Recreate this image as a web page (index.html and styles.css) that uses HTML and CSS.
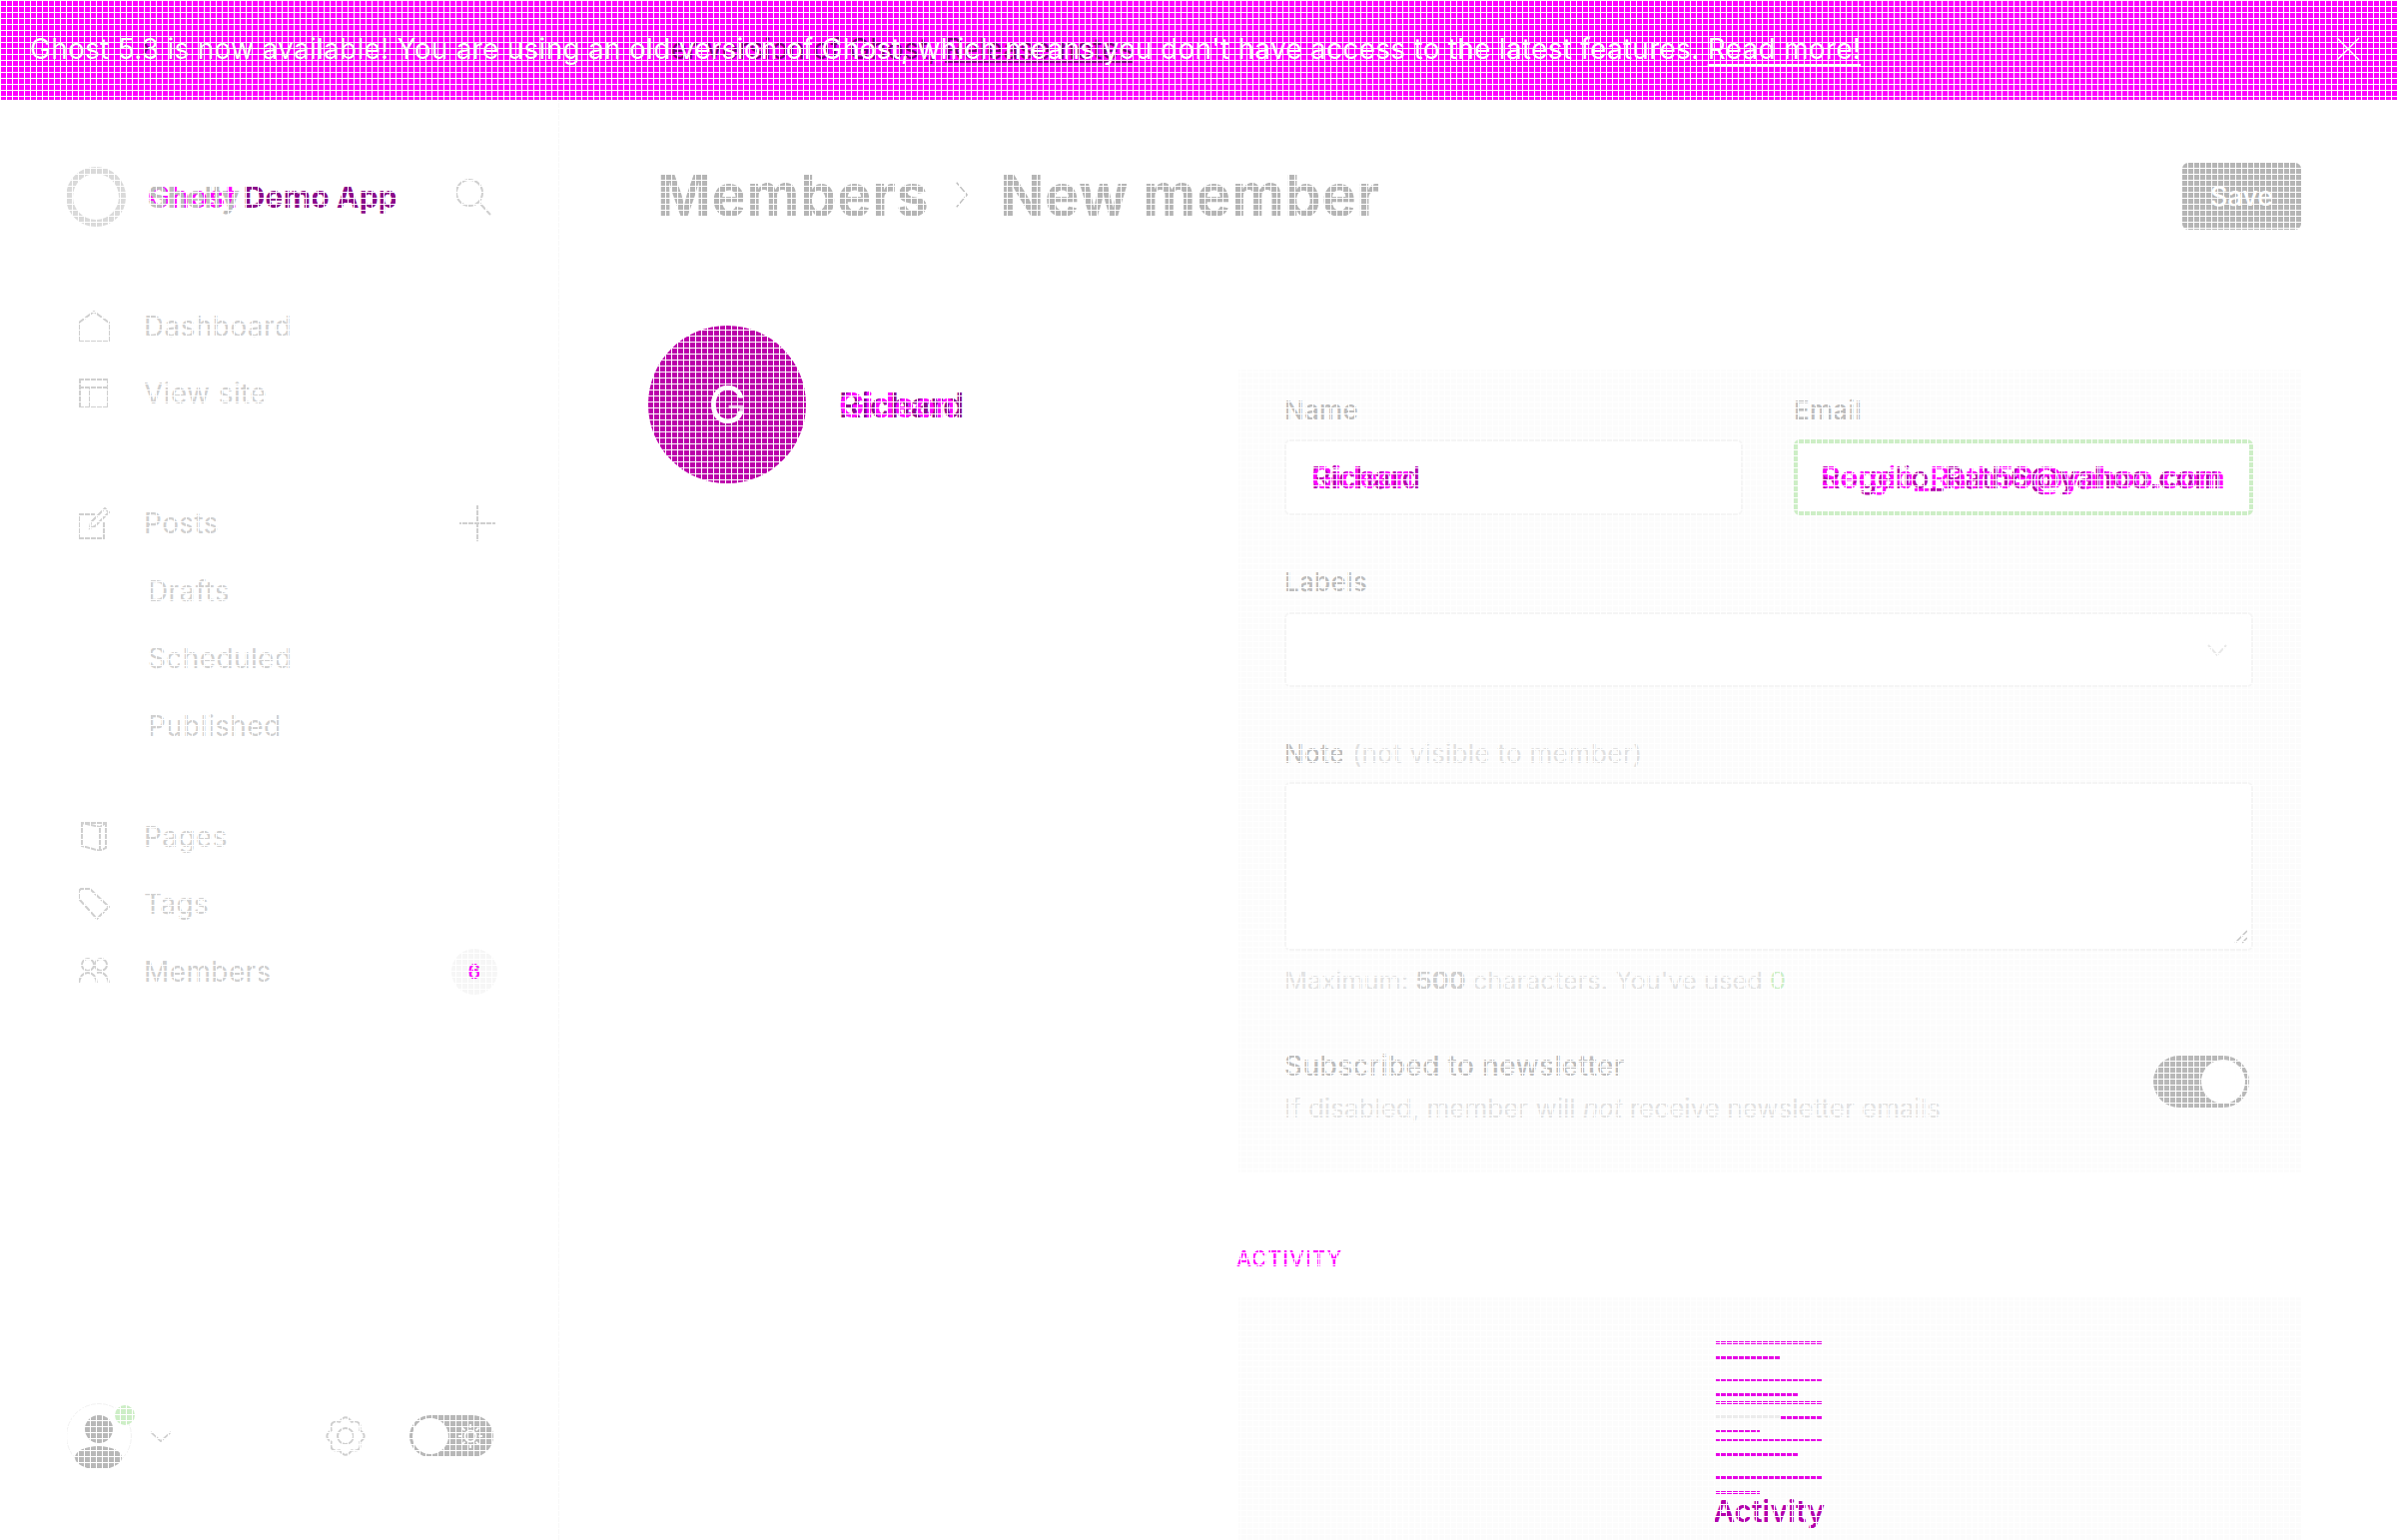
FILE: index.html
```html
<!DOCTYPE html>
<html lang="en">
<head>
    <meta charset="UTF-8">
    <meta name="viewport" content="width=device-width, initial-scale=1.0">
    <title>New member</title>
    <link rel="stylesheet" href="styles.css">
</head>
<body>
    <div class="banner">
        <p class="banner-text">
            <span class="double">
                <span class="banner-main">Ghost 5.3 is now available! You are using an old version of Ghost, which means you don't have access to the latest features. <a class="banner-link">Read more!</a></span>
                <span class="double-top banner-ghost">Ghost 5.8 is now available! You are using an older version of Ghost, <u>Release notes</u></span>
            </span>
        </p>
        <svg class="banner-close" viewBox="0 0 24 24"><path d="M1 1 L23 23 M23 1 L1 23"/></svg>
    </div>

    <div class="app">
        <aside class="sidebar">
            <div class="brand">
                <span class="brand-logo"></span>
                <span class="brand-name">
                    <span class="double"><span class="text-pink">Ghost</span><span class="double-top text-gray">Shelly</span></span>
                    <span class="text-purple">Demo App</span>
                </span>
                <svg class="icon search-icon" viewBox="0 0 40 40"><circle cx="17" cy="16" r="13"/><path d="M27 26 L38 38"/></svg>
            </div>

            <nav class="nav-group">
                <a class="nav-item">
                    <svg class="icon" viewBox="0 0 32 32"><path d="M1 12 L16 1 L31 12 V31 H1 Z"/></svg>
                    Dashboard
                </a>
                <a class="nav-item">
                    <svg class="icon" viewBox="0 0 32 32"><path d="M2 2 H30 V30 H2 Z M2 10 H30 M12 10 V30"/></svg>
                    View site
                </a>
            </nav>

            <nav class="nav-group nav-posts">
                <a class="nav-item">
                    <svg class="icon" viewBox="0 0 32 32"><path d="M26 15 V31 H1 V7 H17 M12 21 L13 15 L27 1 L31 5 L17 19 Z"/></svg>
                    Posts
                    <svg class="icon plus-icon" viewBox="0 0 36 36"><path d="M18 0 V36 M0 18 H36"/></svg>
                </a>
                <a class="nav-item nav-sub">Drafts</a>
                <a class="nav-item nav-sub">Scheduled</a>
                <a class="nav-item nav-sub">Published</a>
            </nav>

            <nav class="nav-group">
                <a class="nav-item">
                    <svg class="icon" viewBox="0 0 32 32"><path d="M4 2 H28 V27 L22 30 L4 25 Z M22 30 V6 L4 2 M22 6 L28 2"/></svg>
                    Pages
                </a>
                <a class="nav-item">
                    <svg class="icon" viewBox="0 0 32 32"><path d="M1 3 L3 1 H12 L31 19 L19 31 L1 11 Z"/></svg>
                    Tags
                </a>
                <a class="nav-item">
                    <svg class="icon" viewBox="0 0 32 32"><circle cx="10" cy="9" r="6"/><circle cx="23" cy="9" r="6"/><path d="M1 28 C2 19 6 17 10 17 C14 17 18 19 19 28 M19 17 C24 15 30 19 31 28"/></svg>
                    Members
                    <span class="badge"><span class="double"><span class="text-gray">3</span><span class="double-top text-pink">6</span></span></span>
                </a>
            </nav>

            <div class="sidebar-foot">
                <div class="user">
                    <span class="user-avatar">
                        <span class="user-head"></span>
                        <span class="user-body"></span>
                        <span class="user-dot"></span>
                    </span>
                    <svg class="icon chevron-icon" viewBox="0 0 24 12"><path d="M1 1 L12 11 L23 1"/></svg>
                </div>
                <svg class="icon gear-icon" viewBox="-2 -2 44 44"><circle cx="20" cy="20" r="8"/><path d="M14.07 5.68 Q20 -3 25.93 5.68 Q36.26 3.74 34.32 14.07 Q43 20 34.32 25.93 Q36.26 36.26 25.93 34.32 Q20 43 14.07 34.32 Q3.74 36.26 5.68 25.93 Q-3 20 5.68 14.07 Q3.74 3.74 14.07 5.68 Z"/></svg>
                <div class="theme-toggle">
                    <span class="theme-knob"></span>
                    <svg class="sun-icon" viewBox="0 0 28 28"><circle cx="14" cy="14" r="6"/><path d="M14 1 V5 M14 23 V27 M1 14 H5 M23 14 H27 M5 5 L8 8 M20 20 L23 23 M23 5 L20 8 M8 20 L5 23"/></svg>
                </div>
            </div>
        </aside>

        <main class="main">
            <header class="page-head">
                <h1 class="page-title">
                    <span>Members</span>
                    <svg class="crumb-icon" viewBox="0 0 16 32"><path d="M2 2 L14 16 L2 30"/></svg>
                    <span>New member</span>
                </h1>
                <button class="save-btn" type="button">Save</button>
            </header>

            <div class="page-body">
                <section class="profile">
                    <div class="profile-avatar">
                        <span class="double"><span>C</span><span class="double-top profile-letter-top">G</span></span>
                    </div>
                    <div class="profile-name">
                        <span class="double"><span class="text-purple">Richard</span><span class="double-top text-pink">Gideon</span></span>
                    </div>
                </section>

                <section class="content">
                    <form class="card form-card">
                        <div class="field-row">
                            <div class="field">
                                <label class="field-label">Name</label>
                                <div class="field-box field-text">
                                    <span class="double"><span class="text-violet">Richard</span><span class="double-top text-pink">Gideon</span></span>
                                </div>
                            </div>
                            <div class="field">
                                <label class="field-label">Email</label>
                                <div class="field-box field-text field-ok">
                                    <span class="double"><span class="text-violet">Rogelio_Rath6@yahoo.com</span><span class="double-top text-pink">Sergio_Rath59@yahoo.com</span></span>
                                </div>
                            </div>
                        </div>

                        <label class="field-label label-gap">Labels</label>
                        <div class="field-box select-box">
                            <svg class="icon select-chevron" viewBox="0 0 20 12"><path d="M1 1 L10 11 L19 1"/></svg>
                        </div>

                        <label class="field-label label-gap">Note <span class="label-muted">(not visible to member)</span></label>
                        <div class="note-wrap">
                            <textarea class="field-box note-box"></textarea>
                            <svg class="note-handle" viewBox="0 0 14 14"><path d="M1 13 L13 1 M8 13 L13 8"/></svg>
                        </div>
                        <p class="hint">Maximum: <b>500</b> characters. You've used <span class="text-green">0</span></p>

                        <div class="subscribe">
                            <div>
                                <h3 class="subscribe-title">Subscribed to newsletter</h3>
                                <p class="subscribe-sub">If disabled, member will <i>not</i> receive newsletter emails</p>
                            </div>
                            <span class="switch"><span class="switch-knob"></span></span>
                        </div>
                    </form>

                    <h4 class="section-title">ACTIVITY</h4>
                    <div class="card activity-card">
                        <svg class="activity-lines" viewBox="0 0 106 153">
                            <rect width="106" height="3" y="0"/>
                            <rect width="65" height="3" y="15"/>
                            <rect width="106" height="3" y="37"/>
                            <rect width="82" height="3" y="52"/>
                            <rect width="106" height="3" y="60"/>
                            <rect class="line-gray" width="65" height="4" y="73"/>
                            <rect width="41" height="3" y="75" x="65"/>
                            <rect width="44" height="3" y="89"/>
                            <rect width="106" height="3" y="97"/>
                            <rect width="82" height="3" y="112"/>
                            <rect width="106" height="3" y="135"/>
                            <rect width="44" height="3" y="150"/>
                        </svg>
                        <div class="activity-name">Activity</div>
                    </div>
                </section>
            </div>
        </main>
    </div>

    <div class="grid-overlay"></div>
</body>
</html>
```

FILE: styles.css
```css
html, body {
    margin: 0;
    height: 1542px;
    overflow: hidden;
}
body {
    position: relative;
    display: flex;
    flex-direction: column;
    font-family: 'Inter', 'Liberation Sans', sans-serif;
    font-size: 28px;
    background-color: #fff;
    color: #d0d0d0;
}
h1, h3, h4, p {
    margin: 0;
}

/* white 1px lattice that runs over the whole picture */
.grid-overlay {
    position: absolute;
    top: 0;
    right: 0;
    bottom: 0;
    left: 0;
    pointer-events: none;
    background-image:
        linear-gradient(to right, #fff 1px, transparent 1px),
        linear-gradient(to bottom, #fff 1px, transparent 1px);
    background-size: 6px 6px;
}

.double {
    position: relative;
    display: inline-block;
    white-space: nowrap;
}
.double-top {
    position: absolute;
    top: 0;
    left: 0;
    white-space: nowrap;
}
.text-pink { color: #f0f; }
.text-purple { color: #8a0a8a; }
.text-violet { color: #b300ac; }
.text-gray { color: #bdbdbd; }
.text-green { color: #cdeec6; }

/* banner */
.banner {
    flex: none;
    box-sizing: border-box;
    height: 100px;
    background-color: #f0f;
    display: flex;
    align-items: center;
    justify-content: space-between;
    padding: 0 37px 2px 30px;
    color: #fff;
}
.banner-text {
    font-size: 28px;
    letter-spacing: 0.27px;
    white-space: nowrap;
}
.banner-main {
    position: relative;
    z-index: 1;
}
.banner-link {
    text-decoration: underline;
    text-underline-offset: 5px;
}
.banner-ghost {
    color: #7a007a;
}
.banner-close {
    width: 24px;
    height: 24px;
    fill: none;
    stroke: #fff;
    stroke-width: 1.5;
}

/* sidebar */
.app {
    flex: 1;
    display: flex;
    min-height: 0;
}
.sidebar {
    flex: none;
    box-sizing: border-box;
    width: 560px;
    padding: 0 56px 0 66px;
    border-right: 2px solid #f8f8f8;
    display: flex;
    flex-direction: column;
}
.icon {
    fill: none;
    stroke: #cfcfcf;
    stroke-width: 2;
    flex: none;
}
.brand {
    height: 60px;
    margin-top: 67px;
    display: flex;
    align-items: center;
}
.brand-logo {
    box-sizing: border-box;
    width: 60px;
    height: 60px;
    border: 7px solid #dadada;
    border-radius: 50%;
    flex: none;
}
.brand-name {
    margin-left: 22px;
    font-weight: 700;
    font-size: 30px;
    letter-spacing: 0.2px;
    white-space: nowrap;
}
.search-icon {
    width: 40px;
    height: 40px;
    margin-left: auto;
    margin-right: 9px;
}
.nav-group {
    display: flex;
    flex-direction: column;
    margin-bottom: 63px;
}
.brand + .nav-group {
    margin-top: 66px;
}
.nav-posts {
    margin-bottom: 44px;
}
.nav-item {
    height: 67.4px;
    display: flex;
    align-items: center;
    gap: 34px;
    margin-left: 12px;
    letter-spacing: 0.4px;
}
.nav-item .icon {
    width: 32px;
    height: 32px;
}
.nav-item .plus-icon {
    width: 36px;
    height: 36px;
    margin-left: auto;
    margin-right: 6px;
}
.nav-sub {
    margin-left: 82px;
}
.badge {
    margin-left: auto;
    margin-right: 4px;
    width: 46px;
    height: 46px;
    border-radius: 50%;
    background-color: #f6f6f6;
    font-size: 20px;
    font-weight: 500;
    display: flex;
    align-items: center;
    justify-content: center;
}
.sidebar-foot {
    margin-top: auto;
    margin-bottom: 71px;
    display: flex;
    align-items: center;
    height: 66px;
}
.user {
    display: flex;
    align-items: center;
    gap: 18px;
}
.user-avatar {
    position: relative;
    box-sizing: border-box;
    display: block;
    width: 66px;
    height: 66px;
    border: 1px solid #f2f2f2;
    border-radius: 50%;
}
.user-head {
    position: absolute;
    left: 18px;
    top: 11px;
    width: 28px;
    height: 28px;
    border-radius: 50%;
    background-color: #b8b8b8;
}
.user-body {
    position: absolute;
    left: 8px;
    top: 42px;
    width: 47px;
    height: 23px;
    border-radius: 50%;
    background-color: #b8b8b8;
}
.user-dot {
    position: absolute;
    left: 48px;
    top: 1px;
    width: 20px;
    height: 20px;
    border-radius: 50%;
    background-color: #cdeec6;
}
.chevron-icon {
    width: 22px;
    height: 11px;
}
.gear-icon {
    width: 44px;
    height: 44px;
    margin-left: auto;
    margin-right: 42px;
}
.theme-toggle {
    position: relative;
    box-sizing: border-box;
    width: 84px;
    height: 42px;
    padding: 3px;
    border-radius: 21px;
    background-color: #b8b8b8;
    display: flex;
    align-items: center;
    margin-right: 8px;
}
.theme-knob {
    width: 36px;
    height: 36px;
    border-radius: 50%;
    background-color: #fff;
}
.sun-icon {
    width: 26px;
    height: 26px;
    margin-left: 9px;
    fill: none;
    stroke: #fff;
    stroke-width: 2;
}

/* main */
.main {
    flex: 1;
    min-width: 0;
    padding: 0 96px 0 89px;
}
.page-head {
    display: flex;
    align-items: center;
    justify-content: space-between;
    margin-top: 63px;
}
.page-title {
    display: flex;
    align-items: center;
    gap: 25px;
    margin-left: 9px;
    padding-bottom: 3px;
    font-size: 58px;
    font-weight: 700;
    letter-spacing: 0.5px;
    line-height: 64px;
    color: #b5b5b5;
    white-space: nowrap;
}
.crumb-icon {
    width: 16px;
    height: 28px;
    margin-right: 5px;
    fill: none;
    stroke: #bdbdbd;
    stroke-width: 1.5;
}
.save-btn {
    width: 119px;
    height: 67px;
    border: none;
    border-radius: 6px;
    background-color: #b5b5b5;
    color: #fff;
    font-family: inherit;
    font-size: 27px;
    font-weight: 500;
}
.page-body {
    display: flex;
    align-items: flex-start;
}
.profile {
    width: 591px;
    flex: none;
    margin-top: 96px;
    display: flex;
    align-items: center;
    gap: 33px;
}
.profile-avatar {
    width: 158px;
    height: 158px;
    border-radius: 50%;
    background-color: #bb00aa;
    color: #fff;
    font-size: 52px;
    font-weight: 400;
    display: flex;
    align-items: center;
    justify-content: center;
}
.profile-letter-top {
    font-weight: 300;
    opacity: 0.7;
}
.profile-name {
    font-size: 34px;
    font-weight: 600;
}
.content {
    flex: 1;
    min-width: 0;
    margin-top: 140px;
}
.card {
    background-color: #fcfcfc;
}
.form-card {
    box-sizing: border-box;
    height: 804px;
    padding: 25px 48px 0 46px;
    display: flex;
    flex-direction: column;
}
.field-row {
    display: grid;
    grid-template-columns: 459px 460px;
    column-gap: 51px;
}
.field {
    display: flex;
    flex-direction: column;
}
.field-label {
    display: block;
    height: 32px;
    font-size: 26px;
    line-height: 32px;
    font-weight: 500;
    color: #bdbdbd;
    letter-spacing: 0.3px;
}
.label-muted {
    font-weight: 400;
    color: #e0e0e0;
}
.label-gap {
    margin-top: 51px;
}
.field-box {
    box-sizing: border-box;
    display: block;
    background-color: #fff;
    border: 2px solid #f5f5f5;
    border-radius: 6px;
    margin-top: 13px;
}
.field-text {
    height: 76px;
    padding: 0 25px;
    display: flex;
    align-items: center;
    font-size: 30px;
    font-weight: 500;
}
.field-ok {
    border: 4px solid #cdeec6;
    padding: 0 23px;
    letter-spacing: 0.3px;
}
.select-box {
    height: 75px;
    margin-top: 14px;
    display: flex;
    align-items: center;
    justify-content: flex-end;
    padding-right: 24px;
}
.select-chevron {
    width: 20px;
    height: 12px;
    stroke: #e8e8e8;
}
.note-wrap {
    position: relative;
    margin-top: 12px;
}
.note-box {
    width: 100%;
    height: 169px;
    margin-top: 0;
    outline: none;
    resize: none;
}
.note-handle {
    position: absolute;
    right: 5px;
    bottom: 7px;
    width: 14px;
    height: 14px;
    fill: none;
    stroke: #c4c4c4;
    stroke-width: 1.5;
}
.hint {
    margin-top: 14px;
    font-size: 25.4px;
    line-height: 32px;
    color: #e2e2e2;
}
.hint b {
    color: #cfcfcf;
}
.subscribe {
    margin-top: 53px;
    display: flex;
    justify-content: space-between;
    align-items: flex-start;
}
.subscribe-title {
    font-size: 28px;
    line-height: 32px;
    font-weight: 500;
    letter-spacing: 0.3px;
    color: #bdbdbd;
}
.subscribe-sub {
    margin-top: 11px;
    font-size: 26px;
    line-height: 32px;
    color: #e2e2e2;
}
.switch {
    box-sizing: border-box;
    width: 96px;
    height: 52px;
    margin: 6px 4px 0 0;
    padding: 4px;
    border-radius: 26px;
    background-color: #b8b8b8;
    display: flex;
    justify-content: flex-end;
}
.switch-knob {
    width: 44px;
    height: 44px;
    border-radius: 50%;
    background-color: #fff;
}
.section-title {
    margin: 72px 0 0 -2px;
    font-size: 21px;
    line-height: 30px;
    font-weight: 500;
    color: #f0f;
    letter-spacing: 1px;
}
.activity-card {
    margin-top: 23px;
    height: 244px;
    box-sizing: border-box;
    display: flex;
    flex-direction: column;
    align-items: center;
    padding: 44px 2px 0 0;
    overflow: hidden;
}
.activity-lines {
    flex: none;
    width: 106px;
    height: 153px;
    fill: #e600e6;
}
.line-gray {
    fill: #ececec;
}
.activity-name {
    margin-top: -1px;
    font-size: 30px;
    line-height: 36px;
    font-weight: 600;
    color: #b300ac;
}
```
